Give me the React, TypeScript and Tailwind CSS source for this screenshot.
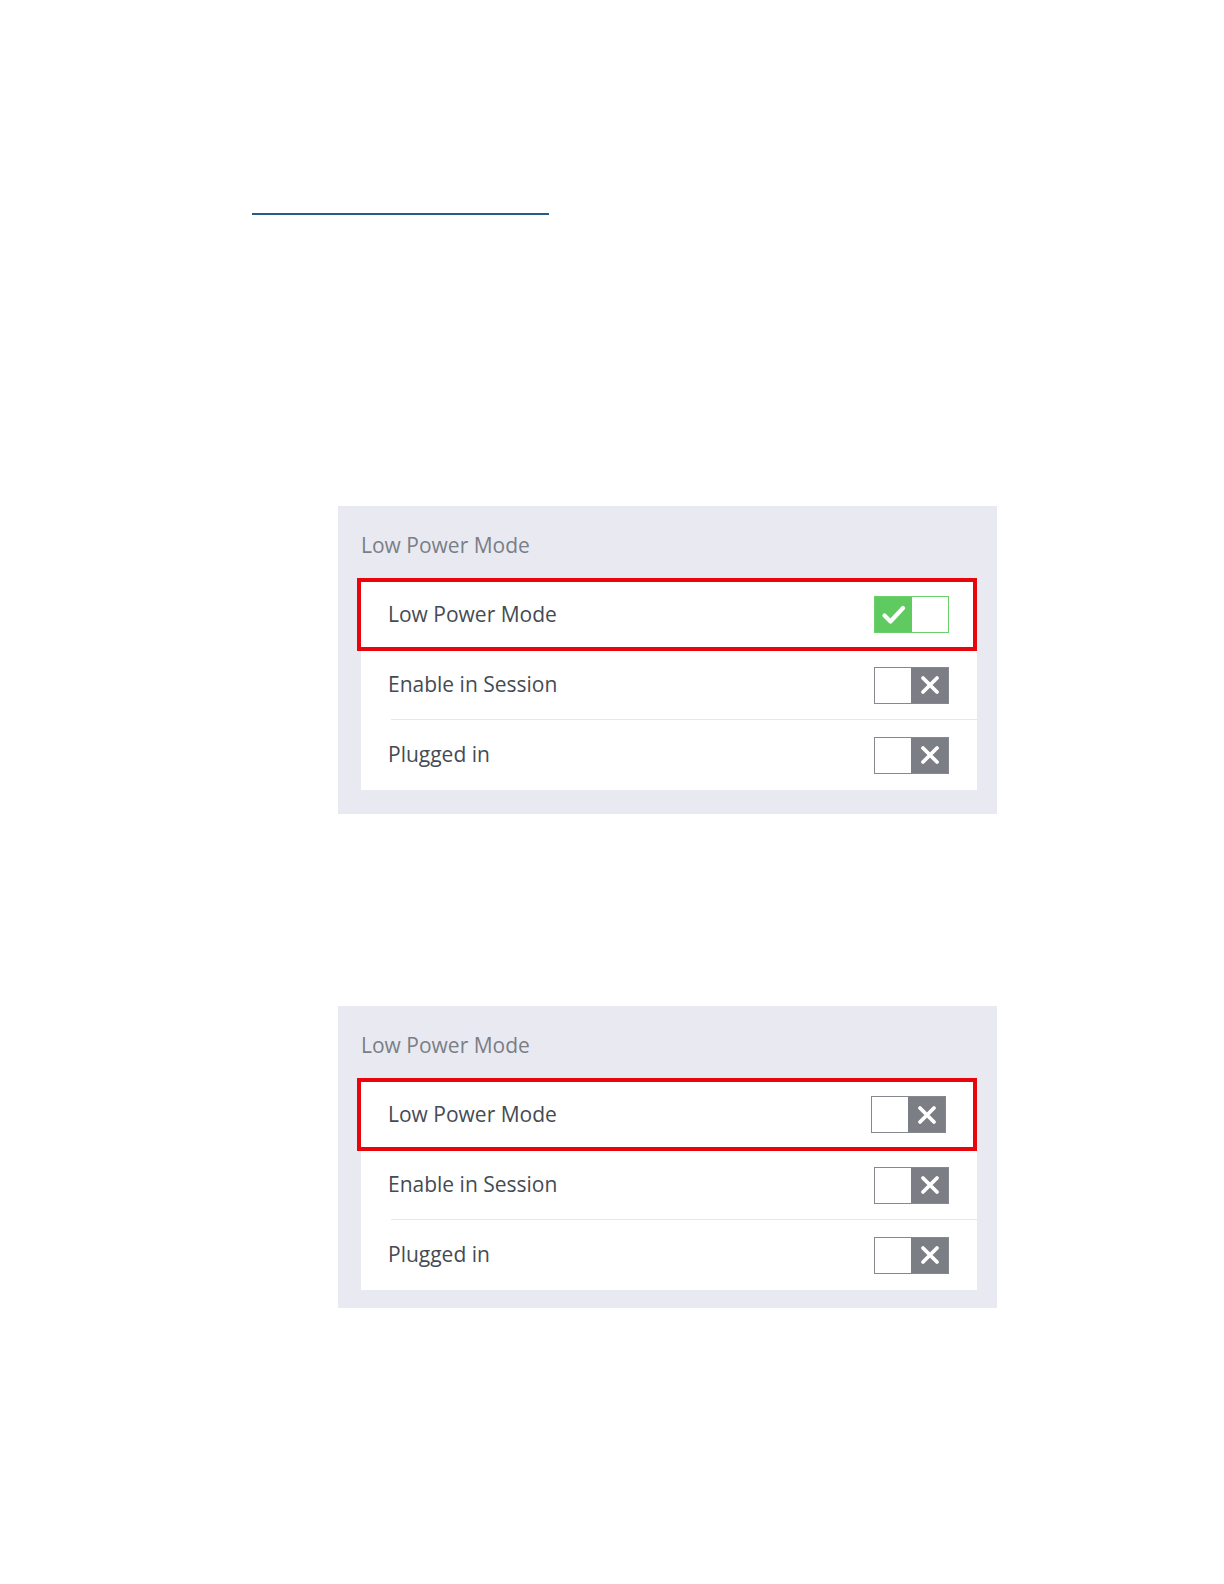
import React from "react";

const font = { fontFamily: '"Open Sans", "Liberation Sans", sans-serif' };

function Toggle({ on }: { on: boolean }) {
  if (on) {
    return (
      <div className="flex h-[37px] w-[75px] border-[1.5px] border-[#6bcf6b]">
        <div className="flex w-[37px] items-center justify-center bg-[#5fca60]">
          <svg width="26" height="22" viewBox="0 0 26 22" fill="none">
            <path d="M3.5 11.5 L9.5 17.5 L22 4" stroke="white" strokeWidth="4.2" strokeLinecap="round" strokeLinejoin="round" />
          </svg>
        </div>
        <div className="flex-1 bg-white" />
      </div>
    );
  }
  return (
    <div className="flex h-[37px] w-[75px] border-[1.5px] border-[#85888e]">
      <div className="w-[36px] bg-white" />
      <div className="flex flex-1 items-center justify-center bg-[#7b7e84]">
        <svg width="20" height="20" viewBox="0 0 20 20" fill="none">
          <path d="M3 3 L17 17 M17 3 L3 17" stroke="white" strokeWidth="3.8" strokeLinecap="round" />
        </svg>
      </div>
    </div>
  );
}

function Panel({ firstOn, pb, shift }: { firstOn: boolean; pb: string; shift: boolean }) {
  return (
    <div className={`ml-[338px] w-[659px] bg-[#e9eaf1] pl-[23px] pr-[20px] pt-[25px] ${pb}`} style={font}>
      <div className="h-[28px] text-[21px] leading-[28px] text-[#7a7e86]">Low Power Mode</div>
      <div className="mt-[19px] bg-white">
        <div className="-ml-[4px] flex h-[73px] items-center justify-between border-4 border-[#e8050b] pl-[27px]">
          <span className="text-[21px] text-[#454b54]">Low Power Mode</span>
          <div className={shift ? "mr-[27px]" : "mr-[24px]"}>
            <Toggle on={firstOn} />
          </div>
        </div>
        <div className="flex h-[68px] items-center justify-between pl-[27px] pr-[28px]">
          <span className="text-[21px] text-[#454b54]">Enable in Session</span>
          <Toggle on={false} />
        </div>
        <div className="ml-[30px] h-px bg-[#e6e7eb]" />
        <div className="flex h-[70px] items-center justify-between pl-[27px] pr-[28px]">
          <span className="text-[21px] text-[#454b54]">Plugged in</span>
          <Toggle on={false} />
        </div>
      </div>
    </div>
  );
}

export default function App() {
  return (
    <div className="relative h-[1584px] w-[1224px] overflow-hidden bg-white">
      <div className="pt-[213px]">
        <div className="ml-[252px] h-[2px] w-[297px] bg-[#235b8b]" />
      </div>
      <div className="mt-[291px]">
        <Panel firstOn={true} pb="pb-[24px]" shift={false} />
      </div>
      <div className="mt-[192px]">
        <Panel firstOn={false} pb="pb-[18px]" shift={true} />
      </div>
    </div>
  );
}
